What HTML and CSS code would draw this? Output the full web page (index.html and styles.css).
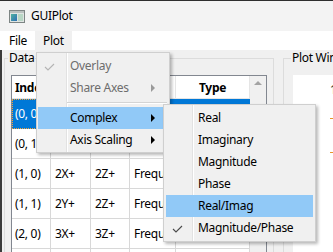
FILE: index.html
```html
<!DOCTYPE html>
<html>
<head>
<meta charset="utf-8">
<link rel="stylesheet" href="styles.css">
</head>
<body>
<div class="window">
  <div class="titlebar">
    <svg class="app-icon" width="16" height="13" viewBox="0 0 16 13">
      <defs>
        <linearGradient id="g1" x1="0" y1="0" x2="1" y2="1">
          <stop offset="0" stop-color="#4fb3a0"/>
          <stop offset="1" stop-color="#2d6db5"/>
        </linearGradient>
      </defs>
      <rect x="0.5" y="0.5" width="15" height="12" fill="#dfe4e2" stroke="#7d8584"/>
      <rect x="1" y="1" width="14" height="2" fill="#b9c0be"/>
      <rect x="2" y="4" width="6" height="7" fill="url(#g1)"/>
      <rect x="9" y="4" width="5" height="7" fill="#b8d6c4"/>
    </svg>
    <span class="title">GUIPlot</span>
  </div>
  <div class="menubar">
    <span class="mb-item">File</span>
    <span class="mb-item open">Plot</span>
  </div>
  <div class="content">
    <div class="group data">
      <span class="group-label">Data</span>
      <div class="table">
        <div class="grid">
          <div class="tr thead"><span>Index</span><span></span><span></span><span></span><span class="type">Type</span></div>
          <div class="tr sel"><span class="focus">(0, 0)</span><span></span><span></span><span></span><span></span></div>
          <div class="tr"><span>(0, 1)</span><span></span><span></span><span></span><span></span></div>
          <div class="tr"><span>(1, 0)</span><span>2X+</span><span>2Z+</span><span>Frequency</span><span></span></div>
          <div class="tr"><span>(1, 1)</span><span>2Y+</span><span>2Z+</span><span>Frequency</span><span></span></div>
          <div class="tr"><span>(2, 0)</span><span>3X+</span><span>3Z+</span><span>Frequency</span><span></span></div>
          <div class="tr"><span></span><span></span><span></span><span></span><span></span></div>
        </div>
        <div class="vscroll"><span class="arrow-up"></span></div>
      </div>
    </div>
    <div class="group plot">
      <span class="group-label">Plot Window</span>
      <div class="canvas">
        <span class="tick-label">1</span>
        <span class="mark m1"></span>
        <span class="mark m2"></span>
      </div>
    </div>
  </div>

  <div class="menu main-menu">
    <div class="item disabled">
      <span class="ck"><svg width="11" height="8" viewBox="0 0 11 8"><path d="M1 4 L4 7 L10 1" fill="none" stroke="#b4b4b4" stroke-width="1.1"/></svg></span>
      <span class="lbl">Overlay</span>
    </div>
    <div class="item disabled">
      <span class="ck"></span>
      <span class="lbl">Share Axes</span>
      <span class="arrow gray"></span>
    </div>
    <div class="sep"></div>
    <div class="item hl">
      <span class="ck"></span>
      <span class="lbl">Complex</span>
      <span class="arrow"></span>
    </div>
    <div class="item">
      <span class="ck"></span>
      <span class="lbl">Axis Scaling</span>
      <span class="arrow"></span>
    </div>
  </div>

  <div class="menu sub-menu">
    <div class="item"><span class="ck"></span><span class="lbl">Real</span></div>
    <div class="item"><span class="ck"></span><span class="lbl">Imaginary</span></div>
    <div class="item"><span class="ck"></span><span class="lbl">Magnitude</span></div>
    <div class="item"><span class="ck"></span><span class="lbl">Phase</span></div>
    <div class="item hl"><span class="ck"></span><span class="lbl">Real/Imag</span></div>
    <div class="item">
      <span class="ck"><svg width="11" height="8" viewBox="0 0 11 8"><path d="M1 4 L4 7 L10 1" fill="none" stroke="#4a4a4a" stroke-width="1.1"/></svg></span>
      <span class="lbl">Magnitude/Phase</span>
    </div>
  </div>
</div>
</body>
</html>
```

FILE: styles.css
```css
* { box-sizing: border-box; }
html, body { margin: 0; padding: 0; }
body {
  width: 333px;
  height: 252px;
  overflow: hidden;
  background: #f0f0f0;
  font-family: "Noto Sans", "Segoe UI", sans-serif;
  font-size: 12px;
  letter-spacing: -0.3px;
  color: #000;
}
.window {
  position: relative;
  width: 333px;
  height: 252px;
  overflow: hidden;
  display: flex;
  flex-direction: column;
}
.titlebar {
  height: 31px;
  flex: none;
  border-top: 1px solid #2e2e2e;
  background: #f3f3f3;
  display: flex;
  align-items: center;
  padding-left: 9px;
  gap: 6px;
}
.app-icon { display: block; flex: none; }
.title { line-height: 16px; }
.menubar {
  height: 19px;
  flex: none;
  background: #fff;
  display: flex;
  padding-left: 1px;
}
.mb-item { padding: 0 8px; line-height: 19px; }
.mb-item.open { background: #f0f0f0; }

.content {
  flex: 1;
  min-height: 0;
  display: flex;
  align-items: flex-start;
  gap: 9px;
  border-left: 2px solid #3b3b3b;
  padding-left: 2px;
}
.group {
  margin-top: 8px;
  border: 1px solid #dcdcdc;
  display: flex;
  flex-direction: column;
  flex: none;
  height: 210px;
}
.data { width: 270px; }
.plot { width: 100px; }
.group-label {
  display: block;
  width: fit-content;
  margin-top: -9px;
  padding: 0 1px;
  line-height: 16px;
  background: #f0f0f0;
}
.data .group-label { margin-left: 3px; }
.plot .group-label { margin-left: 7px; }

.table {
  margin: 9px 0 0 6px;
  width: 256px;
  height: 200px;
  flex: none;
  border: 1px solid #828790;
  background: #fff;
  display: flex;
}
.grid { flex: 1; display: flex; flex-direction: column; min-width: 0; }
.tr {
  display: grid;
  grid-template-columns: 39px 40px 39px 46px 74px;
  height: 30px;
  flex: none;
}
.tr > span {
  border-right: 1px solid #d8d8d8;
  border-bottom: 1px solid #d8d8d8;
  padding-left: 4px;
  display: flex;
  align-items: center;
  white-space: nowrap;
  overflow: hidden;
}
.tr > span:first-child { padding-left: 3px; }
.thead { height: 23px; }
.thead > span {
  font-weight: bold;
  border-right-color: #e5e5e5;
  border-bottom-color: #e5e5e5;
  padding-left: 4px;
}
.thead .type { justify-content: center; padding-left: 0; }
.tr.sel > span { background: #0078d7; color: #fff; border-color: #0078d7; }
.tr.sel > .focus { outline: 1px dotted #f2a33a; outline-offset: -1px; }

.vscroll {
  width: 16px;
  flex: none;
  background: #f0f0f0;
  display: flex;
  justify-content: center;
  padding-top: 5px;
}
.arrow-up {
  width: 0;
  height: 0;
  border-left: 4px solid transparent;
  border-right: 4px solid transparent;
  border-bottom: 4px solid #a3a3a3;
}

.canvas {
  margin: 9px 0 0 9px;
  width: 80px;
  height: 190px;
  flex: none;
  background: #fff;
  display: flex;
  flex-direction: column;
  align-items: flex-start;
  padding: 8px 0 0 37px;
}
.tick-label { line-height: 14px; color: #222; }
.mark { display: block; width: 4px; height: 1px; background: #e8952a; }
.m1 { margin-top: 21px; }
.m2 { margin-top: 33px; }

/* popup menus */
.menu {
  position: absolute;
  background-color: #f0f0f0;
  border: 1px solid #cfcfcf;
  box-shadow: 2px 2px 3px rgba(0, 0, 0, 0.28);
  padding: 2px;
}
.main-menu {
  left: 36px;
  top: 52px;
  width: 134px;
  height: 101px;
  padding-left: 1px;
  background-image: linear-gradient(to right, transparent 29px, #e2e2e2 29px, #e2e2e2 30px, #ffffff 30px, #ffffff 31px, transparent 31px);
}
.sub-menu {
  left: 163px;
  top: 104px;
  width: 153px;
  height: 138px;
  background-image: linear-gradient(to right, transparent 28px, #e2e2e2 28px, #e2e2e2 29px, #ffffff 29px, #ffffff 30px, transparent 30px);
}
.item {
  height: 22px;
  display: flex;
  align-items: center;
  white-space: nowrap;
}
.item.hl { background: #91c9f7; }
.item.disabled { color: #6d6d6d; }
.ck {
  width: 32px;
  flex: none;
  display: flex;
  align-items: center;
  padding-left: 6px;
  height: 22px;
}
.ck svg { display: block; margin-top: 1px; }
.lbl { line-height: 22px; }
.arrow {
  margin-left: auto;
  margin-right: 12px;
  width: 0;
  height: 0;
  border-top: 4px solid transparent;
  border-bottom: 4px solid transparent;
  border-left: 4px solid #000;
}
.arrow.gray { border-left-color: #9a9a9a; }
.sep {
  height: 8px;
  margin-left: 29px;
  padding-top: 3px;
}
.sep::before {
  content: "";
  display: block;
  height: 1px;
  background: #d4d4d4;
  box-shadow: 0 1px 0 #fff;
}
```
